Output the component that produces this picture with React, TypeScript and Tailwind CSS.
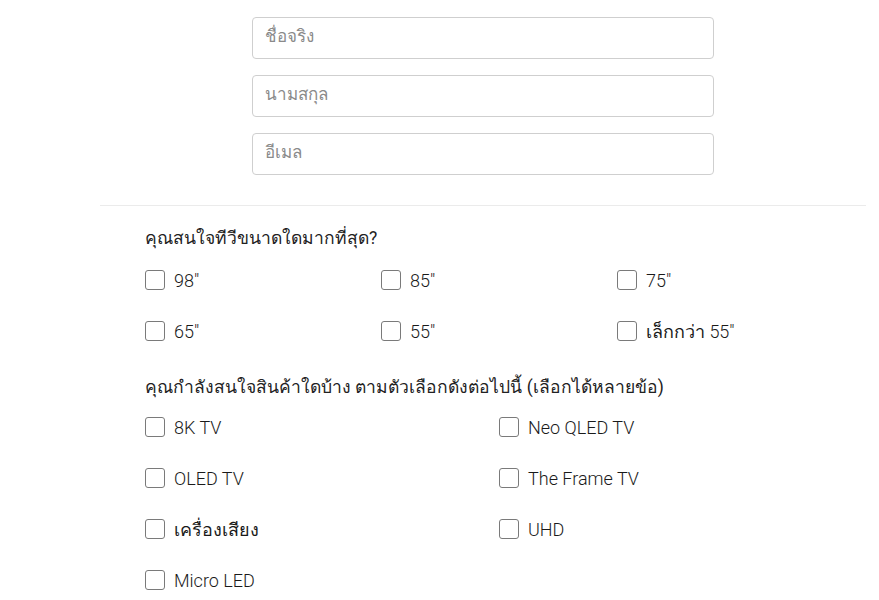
const sizes = ['98"', '85"', '75"', '65"', '55"', 'เล็กกว่า 55"'];
const products = ['8K TV', 'Neo QLED TV', 'OLED TV', 'The Frame TV', 'เครื่องเสียง', 'UHD', 'Micro LED'];

function Check({ label }: { label: string }) {
  return (
    <label className="flex h-[51px] items-center gap-[9px]">
      <span className="h-5 w-5 shrink-0 rounded-[3px] border border-[#7a7a7a] bg-white" />
      <span className="pt-[2px] text-[18px] font-light text-[#1a1a1a]">{label}</span>
    </label>
  );
}

export default function App() {
  return (
    <div
      className="min-h-[600px] w-[879px] overflow-hidden bg-white"
      style={{ fontFamily: 'Roboto, "Noto Sans", sans-serif' }}
    >
      <div className="flex flex-col gap-4 pl-[252px] pt-[17px]">
        {['ชื่อจริง', 'นามสกุล', 'อีเมล'].map((p) => (
          <input
            key={p}
            placeholder={p}
            className="h-[42px] w-[462px] rounded-[4px] border border-[#cfcfcf] px-3 pb-1 text-[17px] outline-none placeholder:text-[#8a8a8a]"
          />
        ))}
      </div>

      <div className="mx-[100px] mt-[30px] w-[766px] border-t border-[#ebebeb]" />

      <div className="pl-[145px] pt-[20px]">
        <p className="text-[17.5px] leading-[24px] text-[#222]">คุณสนใจทีวีขนาดใดมากที่สุด?</p>
        <div className="mt-[4px] grid w-[708px] grid-cols-3">
          {sizes.map((s) => (
            <Check key={s} label={s} />
          ))}
        </div>

        <p className="mt-[19px] text-[17.5px] leading-[24px] text-[#222]">
          คุณกำลังสนใจสินค้าใดบ้าง ตามตัวเลือกดังต่อไปนี้ (เลือกได้หลายข้อ)
        </p>
        <div className="mt-[2px] grid w-[708px] grid-cols-2">
          {products.map((s) => (
            <Check key={s} label={s} />
          ))}
        </div>
      </div>

      <div className="mx-[100px] w-[766px] border-t border-[#f0f0f0]" />
    </div>
  );
}
